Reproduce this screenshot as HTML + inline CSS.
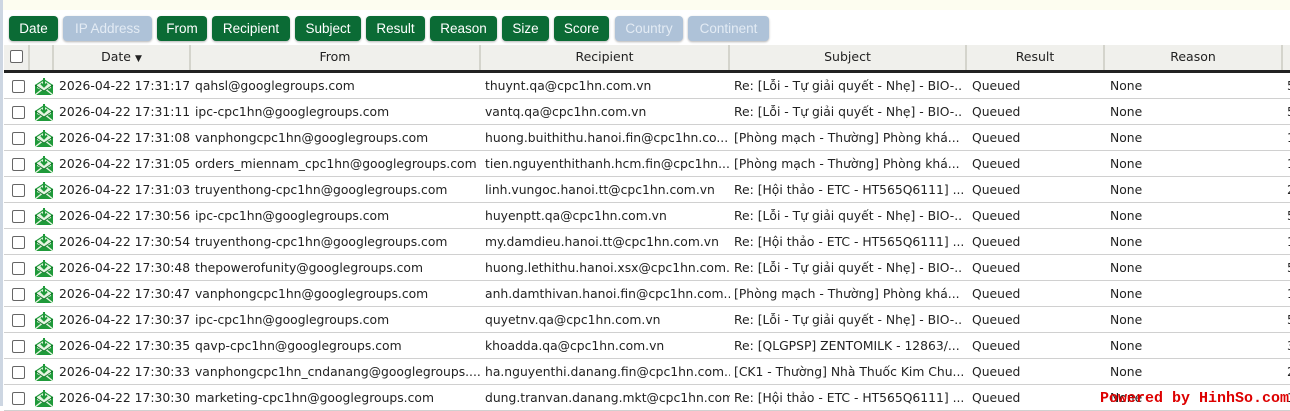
<!DOCTYPE html>
<html><head><meta charset="utf-8"><style>
*{margin:0;padding:0;box-sizing:border-box}
body{width:1290px;height:406px;overflow:hidden;background:#fff;position:relative;font-family:"DejaVu Sans","Liberation Sans",sans-serif;font-size:12.35px;color:#222}
.top{position:absolute;left:0;top:0;width:1290px;height:10px;background:#fdfdf0}
.strip{position:absolute;left:0;top:0;width:3px;height:406px;background:#cdd6e2}
.btn{position:absolute;top:16px;height:25px;border-radius:4px;background:#0b6b35;color:#fff;font-family:"Liberation Sans",Arial,sans-serif;font-size:13.5px;line-height:25px;text-align:center;box-shadow:0 1px 2px rgba(0,0,0,.3)}
.dis{background:#aec2d8;color:#e3ebf4}
.hdr{position:absolute;left:4px;top:45px;width:1286px;height:28px;background:#f0f0ec;border-bottom:3px solid #222}
.hc{position:absolute;top:0;height:25px;line-height:24px;text-align:center;border-right:2px solid #d4d4cc;font-size:12.5px}
.row{position:absolute;left:4px;width:1286px;height:26px;border-bottom:1px solid #d0d0d0}
.c{position:absolute;top:0;line-height:26px;white-space:nowrap;overflow:hidden}
.cb{position:absolute;left:8px;top:7px;width:13px;height:13px;border:1px solid #666;border-radius:2px;background:#fff}
.wm{position:absolute;left:1100px;top:390px;color:#d00;font-family:"Liberation Mono",monospace;font-size:15px;font-weight:bold;white-space:nowrap}
</style></head><body>
<div class="top"></div>
<div class="btn" style="left:9px;width:49px">Date</div>
<div class="btn dis" style="left:63px;width:89px">IP Address</div>
<div class="btn" style="left:157px;width:50px">From</div>
<div class="btn" style="left:212px;width:78px">Recipient</div>
<div class="btn" style="left:295px;width:66px">Subject</div>
<div class="btn" style="left:366px;width:59px">Result</div>
<div class="btn" style="left:430px;width:67px">Reason</div>
<div class="btn" style="left:502px;width:47px">Size</div>
<div class="btn" style="left:554px;width:55px">Score</div>
<div class="btn dis" style="left:615px;width:68px">Country</div>
<div class="btn dis" style="left:688px;width:81px">Continent</div>
<div class="hdr">
<div class="hc" style="left:0;width:26px"><div class="cb" style="left:6px;top:5px"></div></div>
<div class="hc" style="left:26px;width:24px"></div>
<div class="hc" style="left:50px;width:137px">Date <span style="font-size:9px">▼</span></div>
<div class="hc" style="left:187px;width:290px">From</div>
<div class="hc" style="left:477px;width:249px">Recipient</div>
<div class="hc" style="left:726px;width:237px">Subject</div>
<div class="hc" style="left:963px;width:138px">Result</div>
<div class="hc" style="left:1101px;width:178px">Reason</div>
</div>
<div id="rows"></div>
<div class="strip"></div>
<script>
var d=[
["2026-04-22 17:31:17","qahsl@googlegroups.com","thuynt.qa@cpc1hn.com.vn","Re: [Lỗi - Tự giải quyết - Nhẹ] - BIO-..","5"],
["2026-04-22 17:31:11","ipc-cpc1hn@googlegroups.com","vantq.qa@cpc1hn.com.vn","Re: [Lỗi - Tự giải quyết - Nhẹ] - BIO-..","5"],
["2026-04-22 17:31:08","vanphongcpc1hn@googlegroups.com","huong.buithithu.hanoi.fin@cpc1hn.co...","[Phòng mạch - Thường] Phòng khá...","1"],
["2026-04-22 17:31:05","orders_miennam_cpc1hn@googlegroups.com","tien.nguyenthithanh.hcm.fin@cpc1hn....","[Phòng mạch - Thường] Phòng khá...","1"],
["2026-04-22 17:31:03","truyenthong-cpc1hn@googlegroups.com","linh.vungoc.hanoi.tt@cpc1hn.com.vn","Re: [Hội thảo - ETC - HT565Q6111] ...","2"],
["2026-04-22 17:30:56","ipc-cpc1hn@googlegroups.com","huyenptt.qa@cpc1hn.com.vn","Re: [Lỗi - Tự giải quyết - Nhẹ] - BIO-..","5"],
["2026-04-22 17:30:54","truyenthong-cpc1hn@googlegroups.com","my.damdieu.hanoi.tt@cpc1hn.com.vn","Re: [Hội thảo - ETC - HT565Q6111] ...","1"],
["2026-04-22 17:30:48","thepowerofunity@googlegroups.com","huong.lethithu.hanoi.xsx@cpc1hn.com.","Re: [Lỗi - Tự giải quyết - Nhẹ] - BIO-..","5"],
["2026-04-22 17:30:47","vanphongcpc1hn@googlegroups.com","anh.damthivan.hanoi.fin@cpc1hn.com...","[Phòng mạch - Thường] Phòng khá...","1"],
["2026-04-22 17:30:37","ipc-cpc1hn@googlegroups.com","quyetnv.qa@cpc1hn.com.vn","Re: [Lỗi - Tự giải quyết - Nhẹ] - BIO-..","5"],
["2026-04-22 17:30:35","qavp-cpc1hn@googlegroups.com","khoadda.qa@cpc1hn.com.vn","Re: [QLGPSP] ZENTOMILK - 12863/...","3"],
["2026-04-22 17:30:33","vanphongcpc1hn_cndanang@googlegroups....","ha.nguyenthi.danang.fin@cpc1hn.com...","[CK1 - Thường] Nhà Thuốc Kim Chu...","2"],
["2026-04-22 17:30:30","marketing-cpc1hn@googlegroups.com","dung.tranvan.danang.mkt@cpc1hn.com...","Re: [Hội thảo - ETC - HT565Q6111] ...","1"]];
var ic='<svg width="20" height="20" viewBox="0 0 20 20" style="position:absolute;left:30px;top:3px"><path d="M1 9 L10 3 L19 9 L19 19 L1 19 Z" fill="#1f9a3a"/><path d="M3 9 L10 4.5 L17 9 L17 12 L10 15 L3 12Z" fill="#e6f5e2"/><path d="M1 19 L10 12 L19 19" fill="none" stroke="#e6f5e2" stroke-width="1.4"/><path d="M1 9 L10 15 L19 9" fill="none" stroke="#0f6e25" stroke-width="0.8"/><path d="M10 2 V10 M7 7.5 L10 10.5 L13 7.5" fill="none" stroke="#1f9a3a" stroke-width="2"/></svg>';
var h='';
d.forEach(function(r,i){h+='<div class="row" style="top:'+(73+26*i)+'px"><div class="cb"></div>'+ic+
'<div class="c" style="left:55px">'+r[0]+'</div><div class="c" style="left:191px;width:286px">'+r[1]+'</div><div class="c" style="left:481px;width:245px">'+r[2]+'</div><div class="c" style="left:730px;width:233px">'+r[3]+'</div><div class="c" style="left:968px">Queued</div><div class="c" style="left:1106px">None</div><div class="c" style="left:1283px">'+r[4]+'</div></div>';});
document.getElementById('rows').innerHTML=h;
</script>
<div class="wm">Powered by HinhSo.com</div>
</body></html>
